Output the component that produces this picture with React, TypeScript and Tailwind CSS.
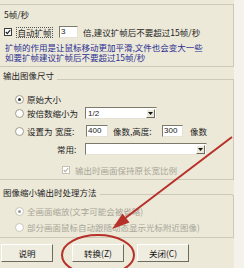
import React from "react";

const BORDER = "border-[#cdc9b8]";

function Radio({ checked = false, disabled = false }: { checked?: boolean; disabled?: boolean }) {
  return (
    <span
      className={`w-[9px] h-[9px] rounded-full border ${disabled ? "border-[#c9c6b8]" : "border-[#a19e8e]"} bg-white flex items-center justify-center shrink-0`}
    >
      {checked && <span className={`w-[3px] h-[3px] rounded-full ${disabled ? "bg-[#9c9a90]" : "bg-[#2e2e2e]"}`} />}
    </span>
  );
}

function Check({ disabled = false }: { disabled?: boolean }) {
  return (
    <span
      className={`w-[8px] h-[8px] border ${disabled ? "border-[#c4c1b3]" : "border-[#3b3b3b]"} bg-white flex items-center justify-center shrink-0`}
    >
      <svg width="6" height="6" viewBox="0 0 6 6">
        <path d="M0.8 3 L2.3 4.6 L5.2 1.2" fill="none" stroke={disabled ? "#b8b5a8" : "#1e1e1e"} strokeWidth="1.2" />
      </svg>
    </span>
  );
}

function DropArrow() {
  return (
    <span className="w-[9px] h-[9px] mr-[1px] bg-[#ece9d8] border-t border-l border-white border-r border-b border-r-[#6d6b60] border-b-[#6d6b60] flex items-center justify-center shrink-0">
      <svg width="5" height="3" viewBox="0 0 5 3">
        <path d="M0 0 L5 0 L2.5 3 Z" fill="#111" />
      </svg>
    </span>
  );
}

function Field({ w, value }: { w: string; value: string }) {
  return (
    <span
      className={`${w} h-[12px] bg-white border-t border-l border-[#7c7a6c] border-r border-b border-r-[#e6e3d6] border-b-[#e6e3d6] flex items-center pl-[1px] text-[8px] leading-[8px] text-[#222] shrink-0 font-['Liberation_Sans',sans-serif]`}
    >
      {value}
    </span>
  );
}

function Btn({ label, className = "" }: { label: string; className?: string }) {
  return (
    <div
      className={`w-[52px] h-[18px] border-t border-l border-white border-r border-b border-r-[#6d6b60] border-b-[#6d6b60] bg-[#efece0] flex items-center justify-center text-[#111] whitespace-nowrap ${className}`}
    >
      {label}
    </div>
  );
}

export default function App() {
  return (
    <div className="relative w-[244px] h-[268px] overflow-hidden bg-[#f4f2ea] text-[8.5px] leading-[9px] text-[#1c1c1c] font-['Noto_Sans_CJK_SC','Noto_Sans',sans-serif]">
      <div className="w-[234px] h-full bg-[#ece9d9] flex flex-col">
        {/* Group A */}
        <div className={`mt-[4px] h-[63px] border-t border-r border-b ${BORDER} flex flex-col`}>
          <div className="h-[18px] flex items-center pl-[4px]">5帧/秒</div>
          <div className="h-[18px] flex items-center pl-[4px] whitespace-nowrap">
            <Check />
            <span className="ml-[4px] w-[37px] h-[11px] border border-dotted border-[#555] flex items-center justify-center shrink-0">
              自动扩帧
            </span>
            <span className="ml-[6px]">
              <Field w="w-[19px]" value="3" />
            </span>
            <span className="ml-[5px]">倍,建议扩帧后不要超过15帧/秒</span>
          </div>
          <div className="pt-[1px] pl-[5px] text-[#2a2e92] whitespace-nowrap leading-[10px]">
            <div className="h-[10px]">扩帧的作用是让鼠标移动更加平滑,文件也会变大一些</div>
            <div className="h-[10px]">如要扩帧建议扩帧后不要超过15帧/秒</div>
          </div>
        </div>

        {/* Group B */}
        <div className="flex items-end h-[13px]">
          <span className="pl-[3px] whitespace-nowrap">输出图像尺寸</span>
          <div className="flex-1 ml-[3px] h-[1px] bg-[#cdc9b8]" />
        </div>
        <div className={`h-[100px] border-r border-b ${BORDER} flex flex-col`}>
          <div className="mt-[12px] h-[14px] flex items-center pl-[15px] gap-[3px]">
            <Radio checked />
            <span>原始大小</span>
          </div>
          <div className="h-[14px] flex items-center pl-[15px] whitespace-nowrap">
            <Radio />
            <span className="ml-[3px] w-[58px]">按倍数缩小为</span>
            <span className="w-[72px] h-[12px] bg-white border-t border-l border-[#7c7a6c] border-r border-b border-r-[#e6e3d6] border-b-[#e6e3d6] flex items-center justify-between">
              <span className="pl-[2px] text-[8px] font-['Liberation_Sans',sans-serif]">1/2</span>
              <DropArrow />
            </span>
          </div>
          <div className="mt-[4px] h-[14px] flex items-center pl-[15px] whitespace-nowrap">
            <Radio />
            <span className="ml-[3px] w-[28px]">设置为</span>
            <span className="w-[31px]">宽度:</span>
            <Field w="w-[22px]" value="400" />
            <span className="pl-[5px] w-[54px]">像数,高度:</span>
            <Field w="w-[21px]" value="300" />
            <span className="pl-[7px]">像数</span>
          </div>
          <div className="mt-[4px] h-[14px] flex items-center pl-[57px]">
            <span className="w-[28px]">常用:</span>
            <span className="w-[122px] h-[12px] bg-white border-t border-l border-[#7c7a6c] border-r border-b border-r-[#e6e3d6] border-b-[#e6e3d6] flex items-center justify-end">
              <DropArrow />
            </span>
          </div>
          <div className="mt-[7px] h-[14px] flex items-center pl-[62px] gap-[5px] text-[#a9a697]">
            <Check disabled />
            <span className="whitespace-nowrap">输出时画面保持原长宽比例</span>
          </div>
        </div>

        {/* Group C */}
        <div className="flex items-end h-[17px]">
          <span className="pl-[3px] whitespace-nowrap">图像缩小输出时处理方法</span>
          <div className={`flex-1 ml-[3px] h-[3px] border-t border-r rounded-tr-[3px] ${BORDER}`} />
        </div>
        <div className={`h-[41px] border-r border-b ${BORDER} flex flex-col text-[#a9a697]`}>
          <div className="mt-[7px] h-[14px] flex items-center pl-[15px] gap-[3px] whitespace-nowrap">
            <Radio checked disabled />
            <span>全画面缩放(文字可能会被省略)</span>
          </div>
          <div className="mt-[2px] h-[14px] flex items-center pl-[15px] gap-[3px] whitespace-nowrap">
            <Radio disabled />
            <span>部分画面鼠标自动跟随动态显示光标附近图像)</span>
          </div>
        </div>

        {/* Buttons */}
        <div className="pt-[6px] flex items-start">
          <Btn label="说明" className="ml-[1px]" />
          <Btn label="转换(Z)" className="ml-[19px]" />
          <Btn label="关闭(C)" className="ml-[13px]" />
        </div>
      </div>

      {/* red annotation overlay */}
      <svg className="absolute left-0 top-0 pointer-events-none" width="244" height="268" viewBox="0 0 244 268">
        <line x1="232" y1="137" x2="124" y2="219" stroke="#b7302a" strokeWidth="2" />
        <polygon points="112,229 129.5,222.5 122.5,213.5" fill="#b7302a" />
        <ellipse cx="98" cy="255" rx="36" ry="20" fill="none" stroke="#b7302a" strokeWidth="2" />
      </svg>
    </div>
  );
}
